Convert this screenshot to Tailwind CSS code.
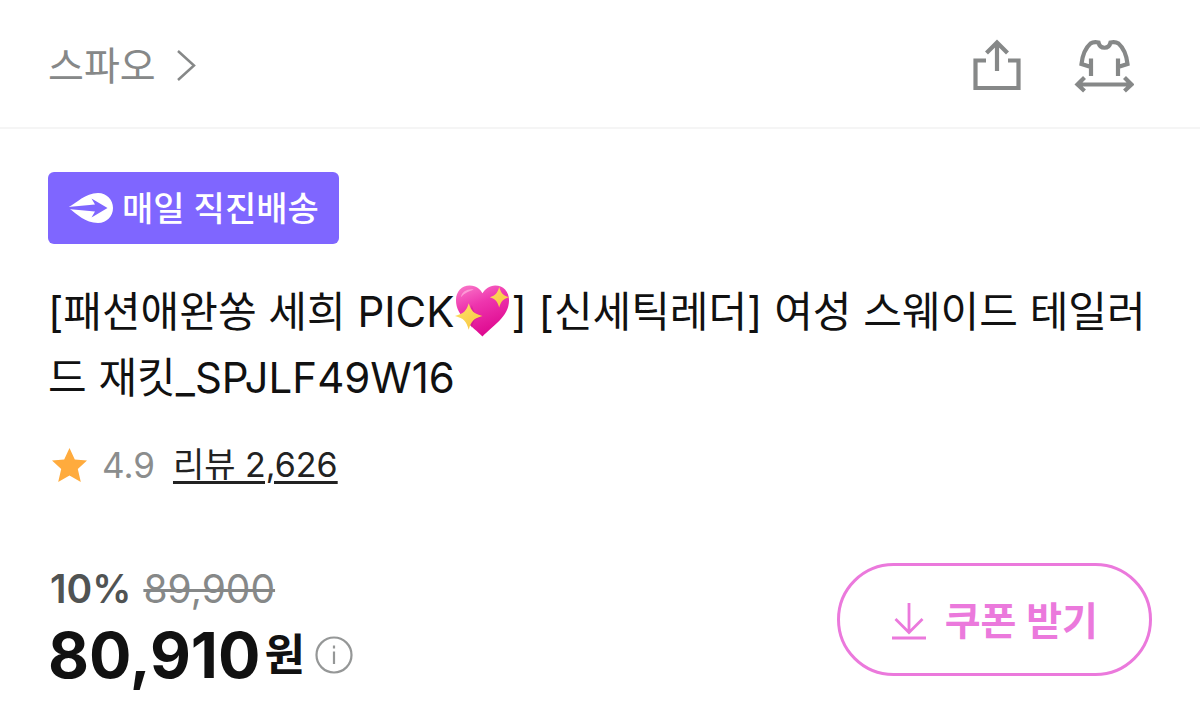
<!DOCTYPE html>
<html lang="ko">
<head>
    <meta charset="UTF-8">
    <meta name="viewport" content="width=device-width, initial-scale=1.0">
    <title>스파오 여성 스웨이드 테일러드 재킷</title>
    <script src="https://cdn.jsdelivr.net/npm/@tailwindcss/browser@4"></script>
    <style>
        body { font-family: 'Inter', 'Noto Sans CJK KR', sans-serif; }
    </style>
</head>
<body class="bg-white text-[#111111]">
    <header class="flex h-[129px] items-center justify-between border-b-2 border-[#f5f5f5] pt-1 pl-12 pr-[66px]">
        <a href="#" class="flex items-center gap-5 text-[39px] leading-[48px] text-[#868888]">
            스파오
            <svg class="h-8 w-5" viewBox="0 0 20 32" fill="none" stroke="currentColor" stroke-width="2.5"><path d="M2 1l16 14.500L2 30"/></svg>
        </a>
        <div class="flex items-center gap-[50px] text-[#868888]">
            <button type="button" aria-label="공유하기">
                <svg class="h-14 w-[52px]" viewBox="0 0 52 56" fill="none" stroke="currentColor" stroke-width="4.200"><path d="M14 22.500H3.500V50H46.500V22.500H36M25 33V5M14.500 15L25 4.500L35.500 15"/></svg>
            </button>
            <button type="button" aria-label="사이즈 보기">
                <svg class="h-14 w-[60px]" viewBox="0 0 60 56" fill="none" stroke="currentColor" stroke-width="4.200"><path d="M17 38V20.500M44 38V20.500M17 29L7.500 26C8.500 17 12.500 9 16.500 5.500Q19.500 3.500 24.500 4.500C26 11.500 35 11.500 36.500 4.500Q41.500 3.500 44.500 5.500C48.500 9 52.500 17 53.500 26L44 29M4 46.500H57M10.500 39.500L3.500 46.500L10.500 53M50.500 39.500L57.500 46.500L50.500 53"/></svg>
            </button>
        </div>
    </header>

    <main class="px-12 pt-[43px] pb-3">
        <div class="flex h-[72px] w-fit items-center gap-2 rounded-md bg-[#7f66ff] px-5 text-[34px] font-medium text-white">
            <svg class="h-8 w-[46px]" viewBox="0 0 46 32">
                <path fill="#fff" d="M0 15.500C9 11 17 1 30 1C39 1 45 8 45 16C45 24 39 31 30 31C17 31 9 22 0 15.500z"/>
                <path fill="#7f66ff" d="M0 15L27 12.500L23.500 6.500L39.500 16L23.500 25.500L27 19.500L0 17z"/>
            </svg>
            매일 직진배송
        </div>

        <h1 class="mt-[35px] text-[42px] leading-[66px]">[패션애완쏭 세희 PICK<svg class="inline-block h-14 w-[57px] align-[-12px]" viewBox="0 0 58 56" role="img" aria-label="반짝이는 하트">
                <defs>
                    <linearGradient id="heart" x1="0" y1="0" x2="0.4" y2="1">
                        <stop offset="0" stop-color="#fa7ccb"/>
                        <stop offset="0.45" stop-color="#ee35ae"/>
                        <stop offset="1" stop-color="#df0b91"/>
                    </linearGradient>
                    <linearGradient id="spark" x1="0" y1="0" x2="1" y2="1">
                        <stop offset="0" stop-color="#ffeb78"/>
                        <stop offset="1" stop-color="#f6b92c"/>
                    </linearGradient>
                </defs>
                <path fill="url(#heart)" d="M29 54C20 44 2 34 2 17C2 8 8 2 16 2C23 2 27 6 29 10C31 6 36 2 42 2C50 2 56 8 56 17C56 34 39 43 29 54z"/>
                <path fill="#ffb2df" opacity="0.700" d="M7 14C8 8 14 5 20 6C16 8 11 9 7 14z"/>
                <path fill="#b80e82" opacity="0.350" d="M18 22l3 8 8 3-8 4-3 8-3-6z"/>
                <path fill="url(#spark)" d="M15 20C17.500 28 20 30.500 29 33C20 35.500 17.500 38 15 47C12.500 38 10 35.500 1 33C10 30.500 12.500 28 15 20zM46 3.500C48 10 49.500 12 56 14C49.500 16 48 18 46 24.500C44 18 42.500 16 36.500 14C42.500 12 44 10 46 3.500z"/>
            </svg>] [신세틱레더] 여성 스웨이드 테일러드 재킷_SPJLF49W16</h1>

        <div class="mt-[34px] flex h-10 items-center text-[35px] leading-10">
            <svg class="mr-3 h-10 w-[42px]" viewBox="0 0 42 40" fill="#ffab3d"><path d="M21.500 3L26.800 14.500L39 15.500L29.800 24L32.800 37L21.500 30.500L10.200 37L13.200 24L4 15.500L16.200 14.500z"/></svg>
            <span class="text-[#8b8d8d]">4.9</span>
            <a href="#" class="ml-[18px] text-[34px] text-[#222222] underline decoration-3 underline-offset-4">리뷰 2,626</a>
        </div>

        <div class="mt-[78px] flex items-start justify-between">
            <div>
                <p class="flex h-[52px] items-center gap-3 pl-[2px] text-[39px] leading-[52px]">
                    <span class="font-semibold text-[#505353]">10%</span>
                    <s class="text-[#868888] decoration-3">89,900</s>
                </p>
                <p class="flex h-20 items-center leading-20">
                    <strong class="text-[63px] font-bold">80,910</strong>
                    <strong class="ml-1 text-[44px] font-bold">원</strong>
                    <button type="button" class="ml-[10px]" aria-label="가격 안내">
                        <svg class="size-[38px]" viewBox="0 0 38 38" fill="none" stroke="#959797" stroke-width="2.200"><circle cx="19" cy="19" r="17.500"/><path d="M19 15.500V28M19 9.500V12.500"/></svg>
                    </button>
                </p>
            </div>
            <button type="button" class="flex h-[113px] items-center gap-[18px] rounded-full border-3 border-[#eb79dc] px-[51px] pt-1 text-[39px] font-semibold text-[#eb79dc]">
                <svg class="h-10 w-9" viewBox="0 0 36 40" fill="none" stroke="currentColor" stroke-width="2.800"><path d="M18 1V30M4.500 17L18 30.500L31.500 17M1 36H35"/></svg>
                쿠폰 받기
            </button>
        </div>
    </main>
</body>
</html>
